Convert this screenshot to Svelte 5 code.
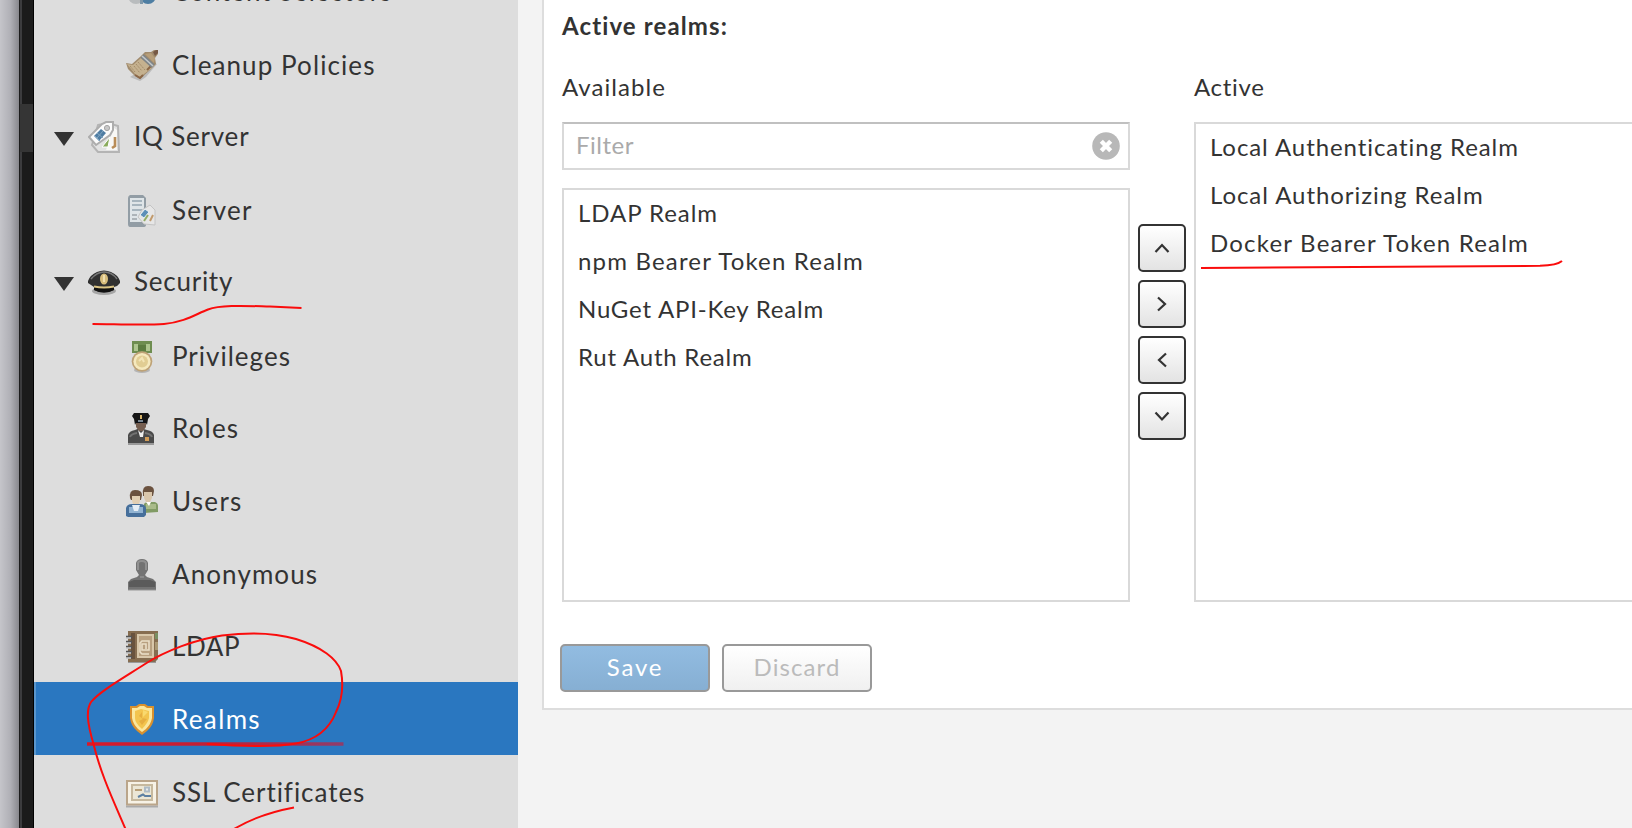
<script>
  const nav = [
    { label: 'Content Selectors', icon: 'selectors', track: 0.95 },
    { label: 'Cleanup Policies', icon: 'broom', track: 1.09 },
    { label: 'IQ Server', icon: 'tags', track: 0.8, group: true },
    { label: 'Server', icon: 'server', track: 1.2 },
    { label: 'Security', icon: 'hat', track: 0.75, group: true },
    { label: 'Privileges', icon: 'medal', track: 1.0 },
    { label: 'Roles', icon: 'officer', track: 1.2 },
    { label: 'Users', icon: 'users', track: 1.3 },
    { label: 'Anonymous', icon: 'anonymous', track: 1.1 },
    { label: 'LDAP', icon: 'book', track: 0.6 },
    { label: 'Realms', icon: 'shield', track: 1.35, selected: true },
    { label: 'SSL Certificates', icon: 'certificate', track: 0.95 }
  ];
  const available = [
    { label: 'LDAP Realm', track: 0.95 },
    { label: 'npm Bearer Token Realm', track: 1.18 },
    { label: 'NuGet API-Key Realm', track: 0.79 },
    { label: 'Rut Auth Realm', track: 0.78 }
  ];
  const active = [
    { label: 'Local Authenticating Realm', track: 0.92 },
    { label: 'Local Authorizing Realm', track: 0.95 },
    { label: 'Docker Bearer Token Realm', track: 1.2 }
  ];
  const movers = [
    { name: 'Move up', d: 'M15.5 26 L22 19 L28.5 26' },
    { name: 'Add', d: 'M18 15.5 L25 22 L18 28.5' },
    { name: 'Remove', d: 'M26 15.5 L19 22 L26 28.5' },
    { name: 'Move down', d: 'M15.5 18.5 L22 25.5 L28.5 18.5' }
  ];
</script>

{#snippet icon(name)}
  <svg class="icon" viewBox="0 0 32 32" width="32" height="32" aria-hidden="true">
    {#if name === 'selectors'}
      <circle cx="10" cy="20" r="8" fill="#b9bcbe" /><circle cx="22" cy="20" r="8" fill="#4e7ea3" />
      <path d="M14 18h3v10h-3z" fill="#7f98aa" />
    {:else if name === 'broom'}
      <path d="M4 27 L14 31 L20 27 L31 14 L27 13z" fill="#9a9a9a" opacity=".5" />
      <path d="M0 13 L6 14 L15 6 L19 2 L25 2 L28 0 H32 V4 L29 8 L30 14 L24 20 L14 29 L8 25 L2 19z" fill="#a18b6d" />
      <path d="M1 14 L7 15 L15 8 L26 18 L14 27 L9 24z" fill="#c5b18f" />
      <path d="M4 16 L9 22 M8 16 L14 23 M12 12 L19 20 M10 14 L16 21" stroke="#a48c6a" stroke-width="1" stroke-dasharray="2 1" />
      <path d="M9 25 L14 28 L17 25 M21 20 L25 16" stroke="#8b6747" stroke-width="2" fill="none" />
      <path d="M16 6 L27 16" stroke="#7f8588" stroke-width="4.4" /><path d="M16 6 L27 16" stroke="#c3c8ca" stroke-width="1.6" />
      <path d="M19 4 L25 3 L29 8 L28 13z" fill="#b79e79" /><path d="M27 2 L30 0 H32 V3 L29 6z" fill="#765844" />
    {:else if name === 'tags'}
      <path d="M10 4 L20 2 L30 5 L31 31 L10 31 L4 24z" fill="#e2e2e2" stroke="#b4b4b4" stroke-width="2" />
      <path d="M26 7 L29 9 V29 H18z" fill="#f8f8f6" /><path d="M24 27 L27 25 V16" stroke="#b98d58" stroke-width="2.6" fill="none" />
      <path d="M14 26 L22 16 L20 26z" fill="#8aab5c" stroke="#fff" stroke-width="1" />
      <path d="M1 16 L14 3 L18 1 H25 V9 L22 14 L8 24z" fill="#fbfbfb" stroke="#adadad" stroke-width="2" />
      <path d="M6 15 L13 8 L18 12 L11 20z" fill="#4f7da3" /><path d="M9 12 L15 17 M7 15 L12 20 M15 10 L9 17" stroke="#81a5c0" stroke-width="1" />
      <circle cx="19" cy="7" r="2.6" fill="#c8c8c8" stroke="#a5a5a5" />
    {:else if name === 'server'}
      <path d="M4 0 H17 L20 3 V30 Q20 32 17 32 H4 Q2 32 2 29 V3 Q2 1 4 0z" fill="#929da5" />
      <path d="M4 3 H18 V27 H4z" fill="#dfe5e8" /><path d="M6 6 H16 M6 10 H16 M6 15 H16" stroke="#a7b5be" stroke-width="2" />
      <path d="M6 20h5M6 24h5" stroke="#adb4b9" stroke-width="2" />
      <path d="M16 15 L24 10 L29 15 V30 L18 29 L12 22z" fill="#e6e6e6" stroke="#c4c4c4" />
      <path d="M14 20 L19 14 L23 17 L18 23z" fill="#5b8fb8" stroke="#e9f0f4" /><path d="M18 26 L22 20" stroke="#92ac65" stroke-width="2" /><path d="M24 26 L27 20" stroke="#c19a6c" stroke-width="2" />
    {:else if name === 'hat'}
      <ellipse cx="16" cy="25" rx="12" ry="4" fill="#777" opacity=".55" />
      <path d="M0 15 Q2 9 9 6 Q16 3 23 6 Q30 9 32 15 V17 L29 20 L26 21 V24 Q16 29 6 24 V21 L3 19 L0 17z" fill="#303030" />
      <path d="M3 13 Q9 6 16 6 Q24 6 29 13" stroke="#777" stroke-width="1.5" fill="none" /><path d="M6 21 H26 V24 Q16 29 6 24z" fill="#111" />
      <path d="M6 20.500 Q16 22.500 26 20.500" stroke="#dbc585" stroke-width="2" fill="none" /><ellipse cx="16" cy="13" rx="4" ry="5.5" fill="#d6bc7b" /><path d="M16 9v7" stroke="#f0dfb0" stroke-width="2" />
    {:else if name === 'medal'}
      <ellipse cx="16" cy="29" rx="8" ry="3" fill="#999" opacity=".6" />
      <path d="M6 0 H26 V12 H6z" fill="#6e8d50" /><path d="M8 3 H12 V10 H8z M20 3 H24 V10 H20z" fill="#adc58e" /><path d="M12 4 H20 V10 H12z" fill="#5c7c40" />
      <circle cx="16" cy="20.500" r="10.3" fill="#bea276" /><circle cx="16" cy="20.500" r="8.6" fill="#f5e9be" /><circle cx="16" cy="20.500" r="6" fill="#e1cd93" /><path d="M13 20 L16 17 L18 21" stroke="#f3e5b6" stroke-width="2" fill="none" />
    {:else if name === 'officer'}
      <path d="M2 30 V22 Q3 18 9 17 L14 15 L21 17 Q27 18 28 22 V30z" fill="#4a4a4a" /><path d="M4 24 Q5 21 11 20 M19 20 Q25 21 26 24" stroke="#727272" stroke-width="2" fill="none" />
      <path d="M10 7 H20 V14 L17 18 H13 L10 14z" fill="#755e50" /><path d="M6 3 L8 0 H22 L24 3 L22 6 L21 12 L19 8 H11 L9 12 L8 6z" fill="#151515" />
      <path d="M10 8 H20 V10 H10z" fill="#101318" /><path d="M12 8h5" stroke="#a8bbcb" stroke-width="1.4" /><path d="M14 2h2v4h-2z" fill="#d7b469" />
      <path d="M12 17 L15 20 L18 17 L17 24 H14z" fill="#eee" /><path d="M19 24h4v4h-4z" fill="#d19c57" /><path d="M2 31H28" stroke="#999" stroke-width="2" />
    {:else if name === 'users'}
      <path d="M18 27 V18 Q19 16 23 16 H29 Q32 17 32 20 V26z" fill="#819b65" /><path d="M20 18 H30 V23 H20z" fill="#a9bb8a" />
      <path d="M17 8 Q16 0 22 0 Q28 0 28 5 L27 10 H17z" fill="#6b523f" /><path d="M18 6 H26 V12 L24 16 H20 L18 12z" fill="#d9c6ab" /><path d="M20 16h5l-2 4z" fill="#fff" />
      <path d="M4 12 Q3 4 9 4 Q16 4 16 9 L15 14 H5z" fill="#6b523f" /><path d="M6 10 H14 V15 L12 20 H8 L6 15z" fill="#e2cfb3" />
      <path d="M0 30 V22 Q1 18 6 18 H14 Q19 18 20 22 V29 L18 31 H2z" fill="#466f9b" /><path d="M3 21 H17 V27 H3z" fill="#91b3d2" /><path d="M6 19 H14 L12 25 H8z" fill="#e6eef5" />
    {:else if name === 'anonymous'}
      <path d="M2 31 V23 L5 20 L11 18 L13 16 L10 11 V4 Q11 0 16 0 Q21 0 22 4 V11 L19 16 L21 18 L27 20 L30 23 V31z" fill="#737373" /><path d="M3 28 V23 L8 21 H24 L29 23 V28z" fill="#5b5b5b" />
      <path d="M12 11 V4 Q12 2 16 2 Q20 2 20 5 V11" stroke="#919191" stroke-width="2" fill="none" /><path d="M14 18h4" stroke="#898989" stroke-width="2" /><path d="M2 31.2H30" stroke="#aaa" />
    {:else if name === 'book'}
      <path d="M2 31 H30" stroke="#999" stroke-width="2" /><path d="M2 0 H32 V28 L29 31 H2z" fill="#866d50" /><path d="M29 2 H32 V8 H29z" fill="#799063" /><path d="M29 11h3v8h-3z" fill="#aa9874" />
      <path d="M5 2 H9 V28 H5z" fill="#69523d" /><path d="M11 3 H28 V27 H11z" fill="#d8c7aa" /><path d="M13 5 H26 V25 H13z" fill="#b8a080" />
      <path d="M20 18 V13 H16 V19 H23 V10 H16 L14 12 V21 L16 23 H23" stroke="#eadfc8" stroke-width="1.6" fill="none" />
      <path d="M0 6h6M0 11h6M0 16h6M0 21h6M0 26h6" stroke="#555" stroke-width="2.6" /><path d="M0 7h5M0 12h5M0 17h5M0 22h5M0 27h5" stroke="#ccc" stroke-width="1.4" />
    {:else if name === 'shield'}
      <path d="M10 2 L13 0 H19 L22 2 H28 V14 Q27 22 21 27 L16 31 L11 27 Q5 22 4 14 V2z" fill="#d9912e" />
      <path d="M6 4 H11 L14 2 H18 L21 4 H26 V14 Q25 20 20 25 L16 28 L12 25 Q7 20 6 14z" fill="#fbe79c" />
      <path d="M9 7 L15 5 L23 7 V14 Q22 19 16 25 Q9 19 9 14z" fill="#f3c44d" /><path d="M16 8 V14 L21 15 L16 21 L13 17 L17 15 L13 12z" fill="#e6ae40" /><path d="M17 6 V13 L22 8z" fill="#f9d96e" />
    {:else if name === 'certificate'}
      <path d="M0 29.500H32" stroke="#aaa" stroke-width="2" /><path d="M0 3H32V28.500H0z" fill="#baa58a" /><path d="M2 5H30V26.500H2z" fill="#f7f2e6" /><path d="M5 7H27V24H5z" fill="#c7b99e" />
      <path d="M7 9H25V22H7z" fill="#ece7d6" /><path d="M9 13h7" stroke="#b89f78" stroke-width="2" /><path d="M18 9.500h6v6h-6z" fill="#aebbc5" /><path d="M20 11.500h2v2h-2z" fill="#e7ebee" />
      <path d="M12 20 L17 17.500 L19 19 H25" stroke="#5d80a2" stroke-width="2" fill="none" />
    {/if}
  </svg>
{/snippet}

<div class="page">
  <div class="desktop"></div>
  <div class="rail"><div class="thumb"></div></div>

  <nav>
    {#each nav as item}
      <div class="row" class:group={item.group} class:selected={item.selected}>
        {#if item.group}
          <svg class="caret" width="20" height="14" viewBox="0 0 20 14"><path d="M0 0H20L10 14z" fill="#333" /></svg>
        {/if}
        {@render icon(item.icon)}
        <span class="label" style="letter-spacing: {item.track}px">{item.label}</span>
      </div>
    {/each}
  </nav>

  <main>
    <section class="panel">
      <h1>Active realms:</h1>
      <div class="columns">
        <div class="col first">
          <div class="heading">Available</div>
          <div class="filter">
            <span>Filter</span>
            <svg width="28" height="28" viewBox="0 0 28 28"><circle cx="14" cy="14" r="13.8" fill="#b8b8b8" /><path d="M9.3 9.3L18.7 18.7M18.7 9.3L9.3 18.7" stroke="#fff" stroke-width="4.4" /></svg>
          </div>
          <div class="list">
            {#each available as realm}
              <div class="realm" style="letter-spacing: {realm.track}px">{realm.label}</div>
            {/each}
          </div>
        </div>
        <div class="movers">
          {#each movers as m}
            <button aria-label={m.name}>
              <svg width="44" height="44" viewBox="0 0 44 44"><path d={m.d} fill="none" stroke="#333" stroke-width="2.2" /></svg>
            </button>
          {/each}
        </div>
        <div class="col second">
          <div class="heading tight">Active</div>
          <div class="list tall">
            {#each active as realm}
              <div class="realm" style="letter-spacing: {realm.track}px">{realm.label}</div>
            {/each}
          </div>
        </div>
      </div>
      <div class="actions">
        <button class="save">Save</button>
        <button class="discard">Discard</button>
      </div>
    </section>
  </main>

  <svg class="ink" width="1632" height="828" viewBox="0 0 1632 828" aria-hidden="true">
    <defs>
      <linearGradient id="fade" gradientUnits="userSpaceOnUse" x1="87" y1="0" x2="343" y2="0">
        <stop offset="0" stop-color="#d91a2a" /><stop offset=".5" stop-color="#c22036" /><stop offset="1" stop-color="#8f3c6b" />
      </linearGradient>
    </defs>
    <path d="M92.5 324 C112 324 145 325.500 164 324 C185 322 196 314 208 309.500 C221 304.500 248 306 270 306.500 L301.500 308" />
    <path d="M1201 268 C1270 267.300 1400 266 1540 265.800 C1550 265.500 1558 264.500 1562 261" />
    <path class="bar" d="M87 744H343.500" />
    <path d="M125.500 829 C114 802 101 775 93.500 744 C87 722 86 710 91 702 C99 692 120 680 145 664 C165 651 197 639 222 635.500 C250 632 276 633 296 639 C322 647 337 659 341 671 C344 688 341 702 336 712 C329 730 315 740 296 743.500 C272 748 237 746 207 744" />
    <path d="M234 829 C249 820 270 812 294 807.500" />
  </svg>
</div>

<style>
  :global(body) { margin: 0; overflow: hidden; }
  .page { position: relative; display: flex; width: 1632px; height: 828px; overflow: hidden; background: #f3f3f3; color: #333; font-family: Lato, "Open Sans", sans-serif; }
  .desktop { width: 19px; flex: none; background: linear-gradient(90deg, #c5c5ca, #b0b0b6 55%, #88888d); }
  .rail { box-sizing: border-box; width: 15px; flex: none; padding-top: 104px; background: linear-gradient(90deg, #1c1c1c 0 1px, #3c3c3e 1px 3px, #1b1b1b 3px 14px, #000 14px); }
  .thumb { width: 13px; margin-left: 1px; height: 48px; background: #353535; }

  nav { width: 484px; flex: none; background: #ddd; display: flex; flex-direction: column; margin-top: -46.5px; height: 920px; }
  .row { box-sizing: border-box; flex: none; height: 72.7px; display: flex; align-items: flex-start; padding: 22.3px 0 0 92px; }
  .row:first-child { height: 74.2px; }
  .row.group { padding: 20.6px 0 0 20px; }
  .row.selected { background: linear-gradient(90deg, #5a96cc 2px, #2a77c0 2px); color: #fff; }
  .caret { margin: 11px 14px 0 0; flex: none; }
  .icon { flex: none; }
  .label { margin: -1px 0 0 14px; font-size: 26px; line-height: 32px; white-space: nowrap; }

  main { flex: 1; min-width: 0; padding-left: 24px; }
  .panel { box-sizing: border-box; width: 1300px; height: 710px; background: #fff; border: 2px solid #ddd; border-top: 0; padding: 10px 0 0 18px; }
  h1 { margin: 0; font-size: 24px; line-height: 32px; letter-spacing: 1.13px; font-weight: 700; }
  .columns { display: flex; height: 560px; }
  .col { display: flex; flex-direction: column; padding-top: 29px; }
  .first { width: 568px; flex: none; }
  .heading { font-size: 24px; line-height: 32px; letter-spacing: 1.05px; margin-bottom: 19px; }
  .tight { letter-spacing: .7px; }
  .filter { box-sizing: border-box; height: 48px; border: 2px solid #d9d9d9; border-top-color: #c0c0c0; display: flex; align-items: center; justify-content: space-between; padding: 0 8px 0 12px; color: #aaa; font-size: 24px; letter-spacing: .5px; margin-bottom: 18px; }
  .filter span { line-height: 44px; margin-top: -2px; }
  .list { box-sizing: border-box; height: 414px; border: 2px solid #d9d9d9; }
  .tall { height: 480px; }
  .realm { height: 48px; line-height: 46px; padding-left: 14px; font-size: 24px; white-space: nowrap; }
  .movers { display: flex; flex-direction: column; gap: 8px; padding: 182px 8px 0; flex: none; }
  .movers button { box-sizing: border-box; width: 48px; height: 48px; padding: 0; border: 2px solid #333; border-radius: 5px; background: linear-gradient(#fff, #e3e3e3); }
  .movers svg { display: block; }
  .second { width: 600px; flex: none; }
  .actions { display: flex; gap: 12px; margin: 42px 0 0 -2px; }
  .actions button { box-sizing: border-box; width: 150px; height: 48px; padding: 0 0 4px; border: 2px solid #999; border-radius: 5px; font: 24px Lato, sans-serif; }
  .actions .save { color: #fff; letter-spacing: 1.8px; background: linear-gradient(#92bce1, #86afd3); }
  .actions .discard { color: #bbb; letter-spacing: 1.1px; background: linear-gradient(#fff, #f0f0f0); }

  .ink { position: absolute; inset: 0; pointer-events: none; }
  .ink path { fill: none; stroke: #fa0c0c; stroke-width: 2; }
  .ink .bar { stroke: url(#fade); stroke-width: 3.6; }
</style>
